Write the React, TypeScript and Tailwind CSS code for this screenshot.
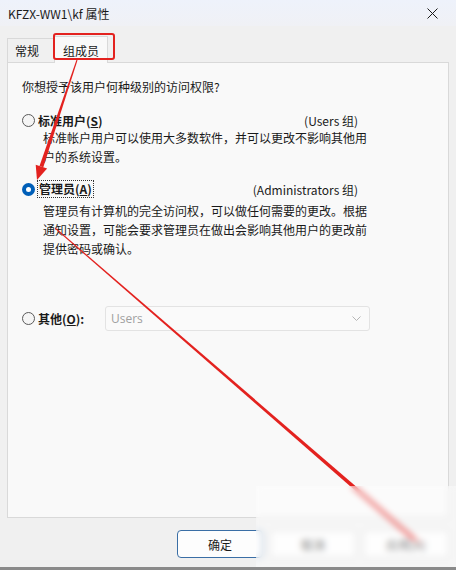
import React from 'react';

const font = "font-['Microsoft_YaHei_UI','Noto_Sans_CJK_SC',sans-serif]";

const Radio = ({ checked }: { checked?: boolean }) =>
  checked ? (
    <span className="w-[13px] h-[13px] rounded-full bg-[#005fb8] flex items-center justify-center shrink-0">
      <span className="w-[5px] h-[5px] rounded-full bg-white"></span>
    </span>
  ) : (
    <span className="w-[13px] h-[13px] rounded-full border border-[#5a5a5a] bg-[#f5f5f5] shrink-0"></span>
  );

const App = () => {
  return (
    <div className={`w-[456px] h-[570px] relative overflow-hidden bg-[#f0f0f0] text-[12px] leading-[19px] text-[#1a1a1a] ${font}`}>
      {/* title bar */}
      <div className="h-[26px] flex items-center justify-between pl-[8px] pr-[18px] bg-gradient-to-b from-[#eef2fb] to-[#f0f1f5]">
        <span className="text-[12px] text-[#1a1a1a]">{'KFZX-WW1\\kf 属性'}</span>
        <svg width="11" height="11" viewBox="0 0 11 11">
          <path d="M0.5 0.5 L10.5 10.5 M10.5 0.5 L0.5 10.5" stroke="#1a1a1a" strokeWidth="1" />
        </svg>
      </div>

      {/* tabs */}
      <div className="h-[36px] flex items-end pl-[7px]">
        <div className="w-[48px] h-[24px] pl-[7px] flex items-center border border-b-0 border-[#d9d9d9] bg-[#f0f0f0]">常规</div>
        <div className="h-[27px] px-[8px] flex items-center border border-b-0 border-[#d9d9d9] bg-[#f9f9f9] -mb-px relative z-10 -ml-px">组成员</div>
      </div>

      {/* panel */}
      <div className="mx-[7px] h-[456px] border border-[#d9d9d9] bg-[#f9f9f9] pl-[14px] pt-[14px]">
        <div>你想授予该用户何种级别的访问权限?</div>

        <div className="mt-[16px] w-[336px] h-[16px] flex items-center justify-between">
          <div className="flex items-center gap-[3px]">
            <Radio />
            <span className="font-semibold">标准用户(<span className="underline">S</span>)</span>
          </div>
          <span>(Users 组)</span>
        </div>
        <div className="ml-[21px]">
          <div>标准帐户用户可以使用大多数软件，并可以更改不影响其他用</div>
          <div>户的系统设置。</div>
        </div>

        <div className="mt-[14px] w-[336px] h-[18px] flex items-center justify-between">
          <div className="flex items-center gap-[2px]">
            <Radio checked />
            <span className="font-semibold border border-dotted border-[#333] px-[1px] leading-[16px]">管理员(<span className="underline">A</span>)</span>
          </div>
          <span>(Administrators 组)</span>
        </div>
        <div className="ml-[21px] mt-[3px]">
          <div>管理员有计算机的完全访问权，可以做任何需要的更改。根据</div>
          <div>通知设置，可能会要求管理员在做出会影响其他用户的更改前</div>
          <div>提供密码或确认。</div>
        </div>

        <div className="mt-[48px] flex items-center">
          <div className="w-[83px] flex items-center gap-[3px]">
            <Radio />
            <span className="font-semibold">其他(<span className="underline">O</span>):</span>
          </div>
          <div className="w-[265px] h-[25px] border border-[#e3e3e3] rounded-[3px] bg-[#fafafa] flex items-center justify-between pl-[5px] pr-[8px] text-[#a0a0a0] font-['Segoe_UI','Open_Sans',sans-serif]">
            <span>Users</span>
            <svg width="9" height="6" viewBox="0 0 9 6">
              <path d="M0.5 0.5 L4.5 4.5 L8.5 0.5" fill="none" stroke="#b5b5b5" strokeWidth="1" />
            </svg>
          </div>
        </div>
      </div>

      {/* footer buttons */}
      <div className="h-[49px] flex justify-end items-start pt-[12px] pr-[7px] gap-[7px]">
        <button className="w-[86px] h-[28px] rounded-[4px] border border-[#3a6ea5] bg-[#fdfdfd] text-[12px]">确定</button>
        <button className="w-[86px] h-[28px] rounded-[4px] border border-[#d0d0d0] bg-[#fdfdfd] text-[12px]">取消</button>
        <button className="w-[86px] h-[28px] rounded-[4px] border border-[#d0d0d0] bg-[#fdfdfd] text-[12px]">应用(A)</button>
      </div>
      <div className="h-[3px] bg-[#8a8a8a]"></div>

      {/* red annotation box around tab */}
      <div className="absolute left-[53px] top-[33px] w-[62px] h-[27px] border-2 border-[#e3221f] rounded-[3px] z-20"></div>

      {/* red arrows */}
      <svg className="absolute left-0 top-0 z-20 pointer-events-none" width="456" height="570" viewBox="0 0 456 570">
        <polygon points="77.5,60.2 76.5,59.8 39.5,166.1 43.3,167.3" fill="#e3221f" />
        <polygon points="47.1,168.6 35.7,164.8 37,180" fill="#e3221f" />
        <polygon points="54.7,228.4 55.3,227.6 416.5,538.5 413.5,541.5" fill="#e3221f" />
        <polygon points="410.6,535.5 419.4,541 424,546" fill="#e3221f" />
      </svg>

      {/* blurred watermark patch */}
      <div className="absolute left-[256px] top-[486px] w-[200px] h-[81px] backdrop-blur-[3px] bg-white/40 z-30"></div>
    </div>
  );
};

export default App;
